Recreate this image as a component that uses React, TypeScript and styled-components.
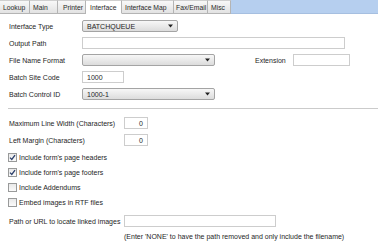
import styled, { createGlobalStyle } from "styled-components";

const GlobalStyle = createGlobalStyle`
  html, body {
    margin: 0;
    padding: 0;
    background: #fff;
  }
  body {
    font-family: "Liberation Sans", Arial, sans-serif;
    font-size: 7px;
    color: #1e1e1e;
  }
`;

const Page = styled.div`
  width: 378px;
  height: 246px;
  overflow: hidden;
  background: #fff;
`;

const TabBar = styled.div`
  display: flex;
  height: 14px;
`;

const Tab = styled.div<{ $w: number; $active?: boolean; $pad?: number }>`
  box-sizing: border-box;
  width: ${(p) => p.$w}px;
  height: 14px;
  padding-left: ${(p) => p.$pad ?? 3}px;
  display: flex;
  align-items: center;
  white-space: nowrap;
  overflow: hidden;
  font-size: 6.8px;
  color: #2a2a2a;
  border-top: 1px solid #cfcfcf;
  border-right: 1px solid #b4b4b4;
  border-bottom: 1px solid ${(p) => (p.$active ? "#fff" : "#b4b4b4")};
  background: ${(p) =>
    p.$active ? "#fff" : "linear-gradient(#f8f8f8, #e2e2e2)"};
`;

const TabFill = styled.div`
  flex: 1;
  height: 14px;
  box-sizing: border-box;
  background: #b6cfef;
  border-bottom: 1px solid #a6bfe0;
`;

const Content = styled.div`
  padding-left: 9px;
`;

const Stack = styled.div<{ $gap: number; $top: number }>`
  display: flex;
  flex-direction: column;
  gap: ${(p) => p.$gap}px;
  margin-top: ${(p) => p.$top}px;
`;

const Row = styled.div<{ $h?: number }>`
  display: flex;
  align-items: center;
  height: ${(p) => p.$h ?? 12}px;
`;

const Label = styled.div<{ $w: number }>`
  width: ${(p) => p.$w}px;
  flex-shrink: 0;
  white-space: nowrap;
`;

const TextBox = styled.div<{ $w: number; $right?: boolean }>`
  box-sizing: border-box;
  width: ${(p) => p.$w}px;
  height: 12px;
  border: 1px solid #cdcdcd;
  background: #fff;
  display: flex;
  align-items: center;
  justify-content: ${(p) => (p.$right ? "flex-end" : "flex-start")};
  padding: 0 4px;
  white-space: nowrap;
`;

const Select = styled.div<{ $w: number }>`
  box-sizing: border-box;
  width: ${(p) => p.$w}px;
  height: 12px;
  border: 1px solid #a4a4a4;
  border-radius: 2px;
  background: linear-gradient(#f7f7f7, #dcdcdc);
  display: flex;
  align-items: center;
  justify-content: space-between;
  padding: 0 4px 0 4px;
  white-space: nowrap;
`;

const Arrow = styled.svg`
  width: 5px;
  height: 4px;
  flex-shrink: 0;
`;

const SideLabel = styled.div`
  margin-left: 40px;
  margin-right: 7px;
  white-space: nowrap;
`;

const Divider = styled.div`
  height: 1px;
  background: #cbcbcb;
  margin: 8px 0 0 -1px;
`;

const CheckRow = styled.div`
  display: flex;
  align-items: center;
  height: 15px;
  gap: 2px;
  margin-left: -1px;
`;

const Box = styled.div`
  box-sizing: border-box;
  width: 9px;
  height: 9px;
  border: 1px solid #999a9a;
  background: linear-gradient(#e9e9e9, #fbfbfb);
  display: flex;
  align-items: center;
  justify-content: center;
`;

const Note = styled.div`
  margin: 5px 0 0 115px;
  height: 10px;
  line-height: 10px;
  white-space: nowrap;
`;

function DropDown({ w, value }: { w: number; value?: string }) {
  return (
    <Select $w={w}>
      <span>{value}</span>
      <Arrow viewBox="0 0 5 4">
        <path d="M0 0.5h5L2.5 3.5z" fill="#222" />
      </Arrow>
    </Select>
  );
}

function Check({ checked, label }: { checked?: boolean; label: string }) {
  return (
    <CheckRow>
      <Box>
        {checked && (
          <svg width="7" height="7" viewBox="0 0 7 7">
            <path
              d="M1 3.6 L2.8 5.5 L6 1.2"
              fill="none"
              stroke="#2b3f6b"
              strokeWidth="1.3"
            />
          </svg>
        )}
      </Box>
      <span>{label}</span>
    </CheckRow>
  );
}

const tabs = [
  { name: "Lookup", w: 30 },
  { name: "Main", w: 28 },
  { name: "Printer", w: 28, pad: 5 },
  { name: "Interface", w: 36, pad: 4, active: true },
  { name: "Interface Map", w: 52, pad: 3 },
  { name: "Fax/Email", w: 34, pad: 2 },
  { name: "Misc", w: 23 },
];

export default function App() {
  return (
    <Page>
      <GlobalStyle />
      <TabBar>
        {tabs.map((t) => (
          <Tab key={t.name} $w={t.w} $pad={t.pad} $active={t.active}>
            {t.name}
          </Tab>
        ))}
        <TabFill />
      </TabBar>
      <Content>
        <Stack $gap={5} $top={6}>
          <Row>
            <Label $w={73}>Interface Type</Label>
            <DropDown w={96} value="BATCHQUEUE" />
          </Row>
          <Row>
            <Label $w={73}>Output Path</Label>
            <TextBox $w={263} />
          </Row>
          <Row>
            <Label $w={73}>File Name Format</Label>
            <DropDown w={133} />
            <SideLabel>Extension</SideLabel>
            <TextBox $w={57} />
          </Row>
          <Row>
            <Label $w={73}>Batch Site Code</Label>
            <TextBox $w={42}>1000</TextBox>
          </Row>
          <Row>
            <Label $w={73}>Batch Control ID</Label>
            <DropDown w={133} value="1000-1" />
          </Row>
        </Stack>
        <Divider />
        <Stack $gap={5} $top={8}>
          <Row>
            <Label $w={115}>Maximum Line Width (Characters)</Label>
            <TextBox $w={24} $right>
              0
            </TextBox>
          </Row>
          <Row>
            <Label $w={115}>Left Margin (Characters)</Label>
            <TextBox $w={24} $right>
              0
            </TextBox>
          </Row>
        </Stack>
        <Stack $gap={0} $top={4}>
          <Check checked label="Include form's page headers" />
          <Check checked label="Include form's page footers" />
          <Check label="Include Addendums" />
          <Check label="Embed images in RTF files" />
        </Stack>
        <Stack $gap={0} $top={5}>
          <Row>
            <Label $w={115}>Path or URL to locate linked images</Label>
            <TextBox $w={152} />
          </Row>
        </Stack>
        <Note>
          (Enter 'NONE' to have the path removed and only include the filename)
        </Note>
      </Content>
    </Page>
  );
}
